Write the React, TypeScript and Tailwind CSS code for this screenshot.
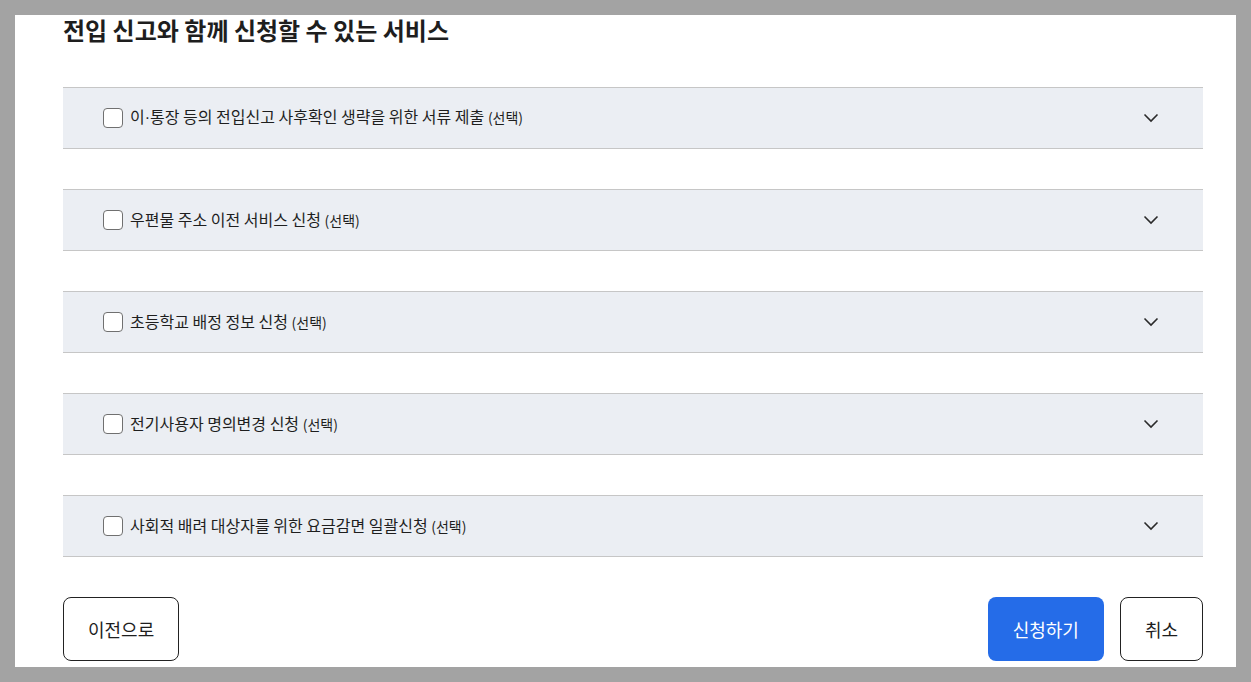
import { useState } from "react";

const services = [
  "이·통장 등의 전입신고 사후확인 생략을 위한 서류 제출",
  "우편물 주소 이전 서비스 신청",
  "초등학교 배정 정보 신청",
  "전기사용자 명의변경 신청",
  "사회적 배려 대상자를 위한 요금감면 일괄신청",
];

const font = { fontFamily: '"Noto Sans CJK KR", "Noto Sans", sans-serif' };

function Chevron() {
  return (
    <svg width="16" height="10" viewBox="0 0 16 10" fill="none" className="text-[#2a2a2a]">
      <path d="M1.5 1.5 8 8l6.5-6.5" stroke="currentColor" strokeWidth="1.6" />
    </svg>
  );
}

// 가운뎃점은 좁은 라틴 글꼴로 표시
function Label({ text }: { text: string }) {
  const parts = text.split("·");
  return (
    <>
      {parts.map((p, i) => (
        <span key={i}>
          {i > 0 && <span className="font-['Liberation_Sans',sans-serif]">·</span>}
          {p}
        </span>
      ))}
    </>
  );
}

function ServiceRow({ label }: { label: string }) {
  const [checked, setChecked] = useState(false);
  return (
    <div className="flex h-[62px] items-center border-y border-[#c6c6c6] bg-[#ebeef3] pl-10 pr-[44px]">
      <button
        onClick={() => setChecked(!checked)}
        className={`h-5 w-5 shrink-0 rounded-[4px] border border-[#707070] ${checked ? "bg-[#256ce8]" : "bg-white"}`}
      />
      <span className="mb-[2px] ml-[7px] flex-1 text-[16px] leading-6 text-[#1e1e1e]">
        <Label text={label} /> <span className="text-[14px]">(선택)</span>
      </span>
      <Chevron />
    </div>
  );
}

export default function App() {
  return (
    <div className="h-screen overflow-hidden bg-[#a3a3a3] p-[15px]" style={font}>
      <div className="flex h-full flex-col overflow-hidden bg-white pl-12 pr-[33px]">
        <h2 className="text-[24px] font-bold leading-[30px] text-[#1e1e1e]">
          전입 신고와 함께 신청할 수 있는 서비스
        </h2>

        <div className="mt-[42px] flex flex-col gap-10">
          {services.map((s) => (
            <ServiceRow key={s} label={s} />
          ))}
        </div>

        <div className="mt-10 flex items-center">
          <button className="h-16 rounded-lg border border-[#222] bg-white px-6 text-[18px] text-[#1e1e1e]">
            이전으로
          </button>
          <div className="ml-auto flex gap-4">
            <button className="h-16 rounded-lg bg-[#256ce8] px-[25px] text-[18px] text-white">
              신청하기
            </button>
            <button className="h-16 rounded-lg border border-[#222] bg-white px-6 text-[18px] text-[#1e1e1e]">
              취소
            </button>
          </div>
        </div>
      </div>
    </div>
  );
}
